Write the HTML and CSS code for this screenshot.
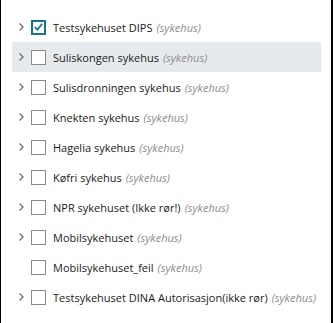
FILE: index.html
```html
<!DOCTYPE html>
<html lang="en">
<head>
    <meta charset="UTF-8">
    <meta name="viewport" content="width=device-width, initial-scale=1.0">
    <title>Sykehus</title>
    <link rel="stylesheet" href="styles.css">
</head>
<body>
    <div class="panel">
        <ul class="tree">
            <li class="node">
                <span class="chevron"><svg width="7" height="10" viewBox="0 0 7 10"><path d="M1.5 1.5 L5 5 L1.5 8.5" fill="none" stroke="#777" stroke-width="1.4"/></svg></span>
                <span class="check checked"><svg width="12" height="12" viewBox="0 0 12 12"><path d="M2 6.2 L4.8 9 L10 2.5" fill="none" stroke="#0d73a8" stroke-width="2"/></svg></span>
                <span class="name">Testsykehuset DIPS</span> <span class="kind">(sykehus)</span>
            </li>
            <li class="node hover">
                <span class="chevron"><svg width="7" height="10" viewBox="0 0 7 10"><path d="M1.5 1.5 L5 5 L1.5 8.5" fill="none" stroke="#777" stroke-width="1.4"/></svg></span>
                <span class="check"></span>
                <span class="name">Suliskongen sykehus</span> <span class="kind">(sykehus)</span>
            </li>
            <li class="node">
                <span class="chevron"><svg width="7" height="10" viewBox="0 0 7 10"><path d="M1.5 1.5 L5 5 L1.5 8.5" fill="none" stroke="#777" stroke-width="1.4"/></svg></span>
                <span class="check"></span>
                <span class="name">Sulisdronningen sykehus</span> <span class="kind">(sykehus)</span>
            </li>
            <li class="node">
                <span class="chevron"><svg width="7" height="10" viewBox="0 0 7 10"><path d="M1.5 1.5 L5 5 L1.5 8.5" fill="none" stroke="#777" stroke-width="1.4"/></svg></span>
                <span class="check"></span>
                <span class="name">Knekten sykehus</span> <span class="kind">(sykehus)</span>
            </li>
            <li class="node">
                <span class="chevron"><svg width="7" height="10" viewBox="0 0 7 10"><path d="M1.5 1.5 L5 5 L1.5 8.5" fill="none" stroke="#777" stroke-width="1.4"/></svg></span>
                <span class="check"></span>
                <span class="name">Hagelia sykehus</span> <span class="kind">(sykehus)</span>
            </li>
            <li class="node">
                <span class="chevron"><svg width="7" height="10" viewBox="0 0 7 10"><path d="M1.5 1.5 L5 5 L1.5 8.5" fill="none" stroke="#777" stroke-width="1.4"/></svg></span>
                <span class="check"></span>
                <span class="name">Køfri sykehus</span> <span class="kind">(sykehus)</span>
            </li>
            <li class="node">
                <span class="chevron"><svg width="7" height="10" viewBox="0 0 7 10"><path d="M1.5 1.5 L5 5 L1.5 8.5" fill="none" stroke="#777" stroke-width="1.4"/></svg></span>
                <span class="check"></span>
                <span class="name">NPR sykehuset (Ikke rør!)</span> <span class="kind">(sykehus)</span>
            </li>
            <li class="node">
                <span class="chevron"><svg width="7" height="10" viewBox="0 0 7 10"><path d="M1.5 1.5 L5 5 L1.5 8.5" fill="none" stroke="#777" stroke-width="1.4"/></svg></span>
                <span class="check"></span>
                <span class="name">Mobilsykehuset</span> <span class="kind">(sykehus)</span>
            </li>
            <li class="node">
                <span class="chevron"></span>
                <span class="check"></span>
                <span class="name">Mobilsykehuset_feil</span> <span class="kind">(sykehus)</span>
            </li>
            <li class="node">
                <span class="chevron"><svg width="7" height="10" viewBox="0 0 7 10"><path d="M1.5 1.5 L5 5 L1.5 8.5" fill="none" stroke="#777" stroke-width="1.4"/></svg></span>
                <span class="check"></span>
                <span class="name">Testsykehuset DINA Autorisasjon(ikke rør)</span> <span class="kind">(sykehus)</span>
            </li>
        </ul>
    </div>
</body>
</html>
```
FILE: styles.css
```css
html, body {
    margin: 0;
    height: 100%;
}
body {
    font-family: "Open Sans", "Noto Sans", sans-serif;
    font-size: 11px;
    color: #1a1a1a;
    background: white;
}
.panel {
    height: 100%;
    box-sizing: border-box;
    border-left: 1px solid #000;
    border-right: 2px solid #000;
    padding: 12px 0 0 11px;
}
.tree {
    list-style: none;
    margin: 0;
    padding: 0;
    width: 309px;
}
.node {
    display: flex;
    align-items: center;
    height: 30px;
    padding-left: 6px;
    white-space: nowrap;
}
.node.hover {
    background: #e6eaed;
}
.chevron {
    flex-shrink: 0;
    width: 13px;
    display: flex;
    align-items: center;
}
.check {
    flex-shrink: 0;
    box-sizing: border-box;
    width: 15px;
    height: 15px;
    border: 1px solid #8a8a8a;
    background: white;
    margin-right: 7px;
    display: flex;
    align-items: center;
    justify-content: center;
}
.check.checked {
    border: 2px solid #157488;
}
.name {
    margin-right: 4px;
}
.kind {
    font-style: italic;
    color: #8c8c8c;
}
```
